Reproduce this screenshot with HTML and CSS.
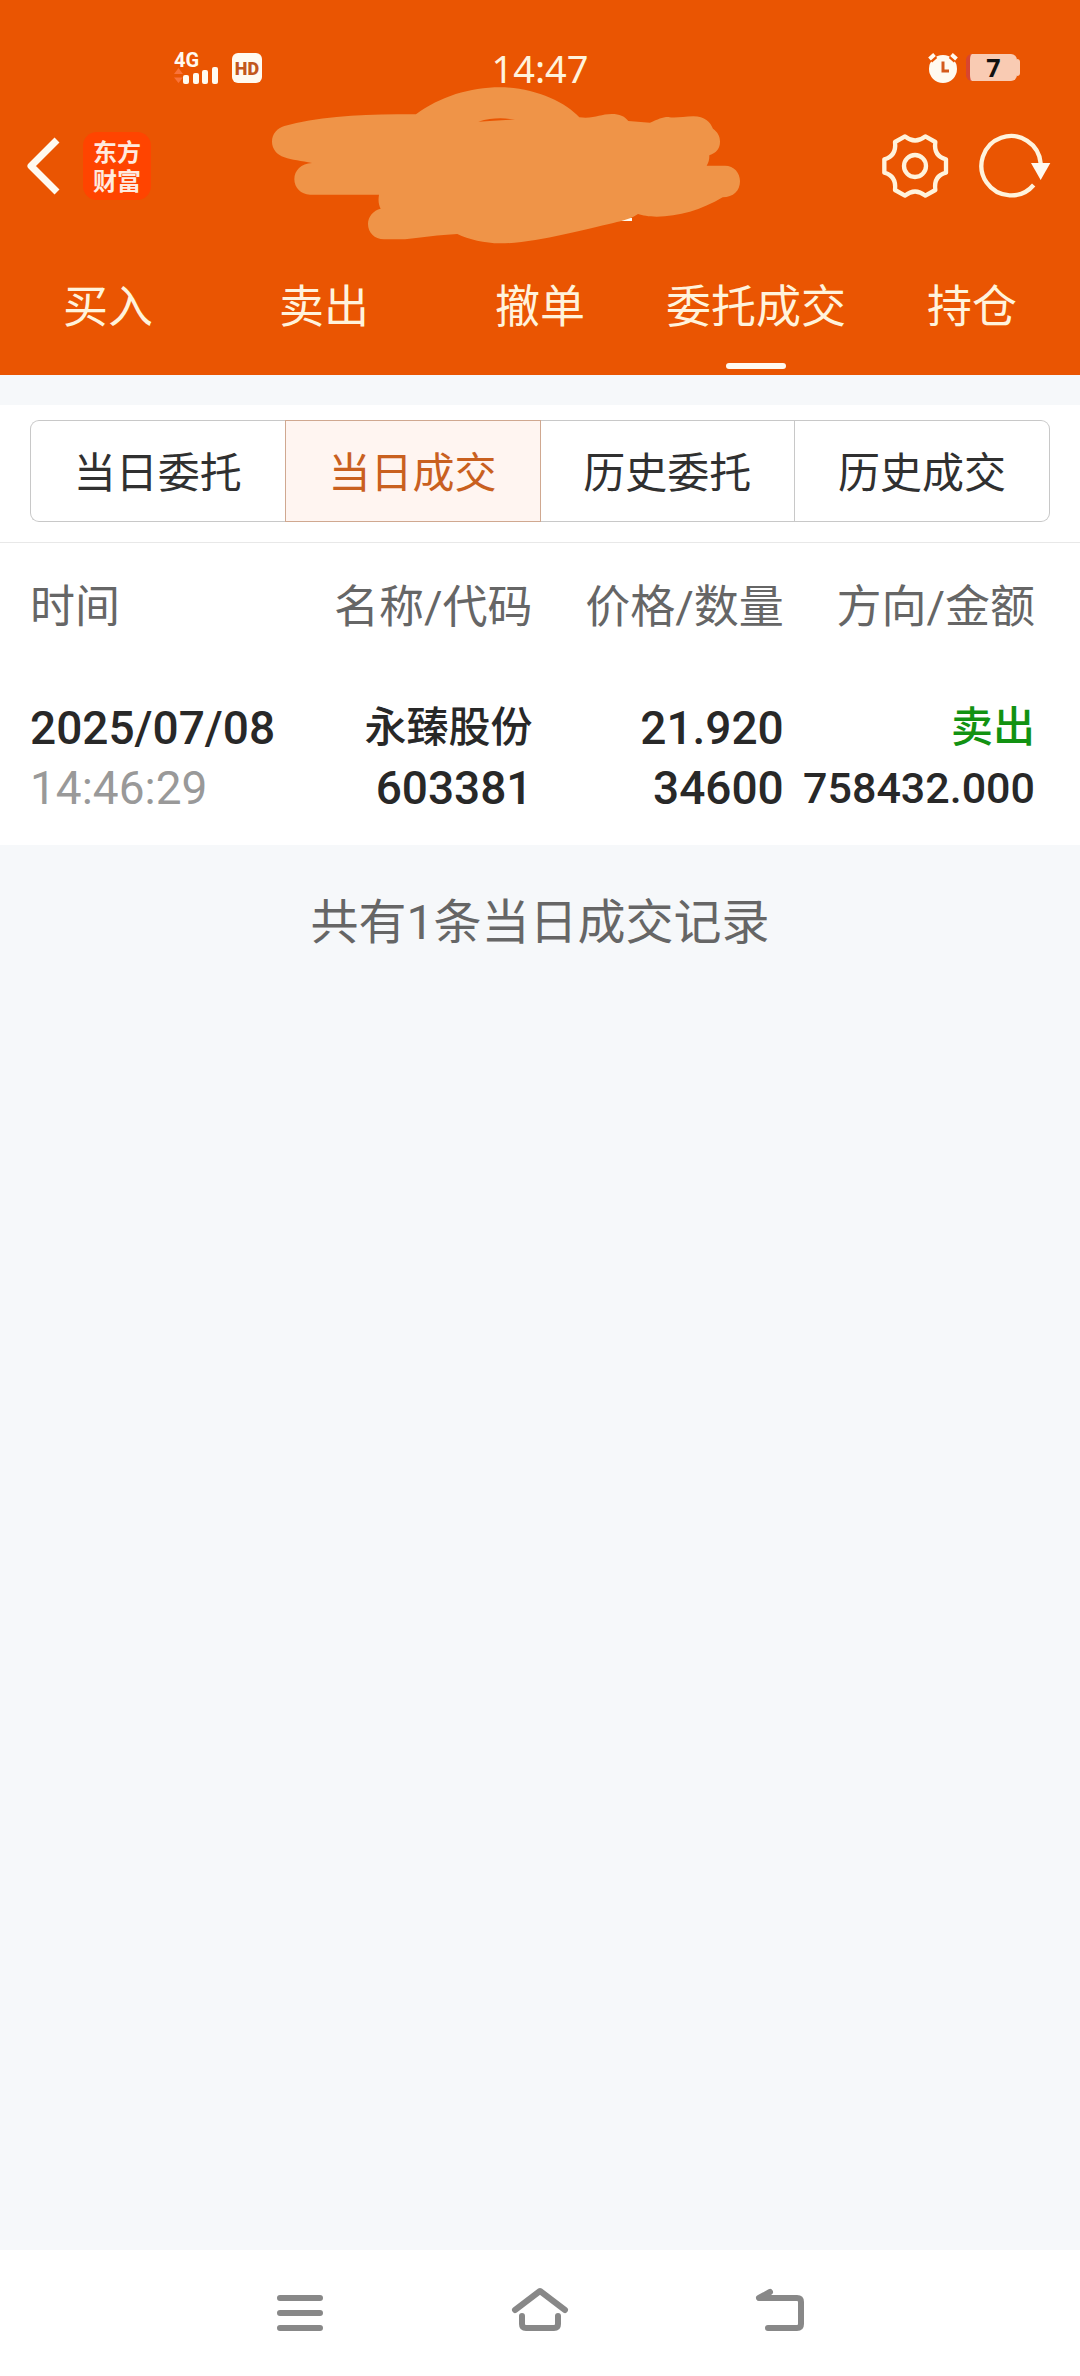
FILE: index.html
```html
<!DOCTYPE html>
<html lang="zh-CN">
<head>
<meta charset="utf-8">
<meta name="viewport" content="width=device-width, initial-scale=1">
<title>当日成交</title>
<link rel="stylesheet" href="styles.css">
</head>
<body>
<header class="header">
  <div class="status">
    <div class="status-side status-left">
      <div class="signal">
        <span class="signal-label">4G</span>
        <svg class="signal-bars" width="45" height="17" viewBox="0 0 45 17" aria-hidden="true">
          <path fill="#f9733a" d="M0 7L4.500 1L9 7ZM0 10.500L4.500 16L9 10.500Z"/>
          <g fill="#fffaf0"><rect x="9" y="8" width="6" height="9" rx="2"/><rect x="19" y="6" width="6" height="11" rx="2"/><rect x="28" y="3" width="6" height="14" rx="2"/><rect x="38" y="0" width="6" height="17" rx="2"/></g>
        </svg>
      </div>
      <span class="hd">HD</span>
    </div>
    <span class="clock">14:47</span>
    <div class="status-side status-right">
      <svg width="30" height="30" viewBox="0 0 30 30" aria-hidden="true">
        <circle cx="15" cy="16" r="14" fill="#fffaf0"/>
        <path d="M1.500 6.500L6.500 2M28.500 6.500L23.500 2" stroke="#ea5502" stroke-width="8"/>
        <path d="M1.500 6L6.500 1.500M28.500 6L23.500 1.500" stroke="#fffaf0" stroke-width="4"/>
        <path d="M15 8.500V18H21" fill="none" stroke="#d45a1c" stroke-width="3"/>
      </svg>
      <span class="battery">7</span>
    </div>
  </div>
  <div class="titlebar">
    <button class="icon-btn" type="button" aria-label="返回">
      <svg width="36" height="60" viewBox="0 0 36 60"><path d="M31 4L5 30L31 56" fill="none" stroke="#fffaf0" stroke-width="7" stroke-linejoin="round"/></svg>
    </button>
    <div class="logo">东方<br>财富</div>
    <svg class="scribble" width="510" height="190" viewBox="0 0 1530 570" aria-hidden="true">
      <rect x="1060" y="444" width="86" height="9" fill="#fffaf0"/>
      <path fill="#ef9448" fill-rule="evenodd" d="M498 133C570 80 660 52 750 52C850 52 945 95 988 142C1035 147 1050 132 1085 132C1110 132 1122 138 1135 153L1200 158C1225 148 1235 141 1255 141C1275 146 1300 139 1330 139C1365 139 1380 156 1389 176C1403 186 1410 198 1410 215C1410 235 1400 248 1378 256C1378 270 1376 278 1370 287H1425C1452 287 1470 308 1470 334C1470 362 1450 382 1418 382C1355 420 1285 440 1220 440C1195 440 1178 436 1164 432C1145 445 1120 452 1090 459C1000 478 860 520 750 520C705 520 655 508 622 492C565 495 520 502 465 508H402C373 508 354 487 354 462C354 440 370 421 392 416C386 405 384 392 387 374H180C153 374 133 353 133 328C133 301 153 281 186 279C155 273 125 270 103 262C80 254 66 236 66 215C66 192 82 174 103 168C210 138 350 130 498 133ZM685 155C725 143 760 143 795 149C755 149 720 154 685 155Z"/>
    </svg>
    <div class="actions">
      <button class="icon-btn" type="button" aria-label="设置">
        <svg width="70" height="70" viewBox="60 303 210 210"><g fill="none" stroke="#fff3dc" stroke-width="13" stroke-linejoin="round"><path d="M135 319Q165 344 196 319L226 336Q220 378 258 388V428Q220 438 226 480L196 497Q165 472 135 497L105 480Q110 438 73 428V388Q110 378 105 336Z"/><circle cx="165" cy="408" r="33"/></g></svg>
      </button>
      <button class="icon-btn" type="button" aria-label="刷新">
        <svg width="74" height="70" viewBox="353 303 222 210"><path d="M541 400A89 89 0 1 0 520 465" fill="none" stroke="#fff3dc" stroke-width="13"/><path d="M512 399H570L541 450Z" fill="#fffaf0"/></svg>
      </button>
    </div>
  </div>
  <nav class="tabs">
    <button type="button" class="tab">买入</button>
    <button type="button" class="tab">卖出</button>
    <button type="button" class="tab">撤单</button>
    <button type="button" class="tab active">委托成交</button>
    <button type="button" class="tab">持仓</button>
  </nav>
</header>
<main class="main">
  <div class="segment-wrap">
    <div class="segment">
      <button type="button" class="seg">当日委托</button>
      <button type="button" class="seg selected">当日成交</button>
      <button type="button" class="seg">历史委托</button>
      <button type="button" class="seg">历史成交</button>
    </div>
  </div>
  <div class="records">
    <table>
      <thead>
        <tr><th scope="col">时间</th><th scope="col">名称/代码</th><th scope="col">价格/数量</th><th scope="col">方向/金额</th></tr>
      </thead>
      <tbody>
        <tr>
          <td><div>2025/07/08</div><div class="muted">14:46:29</div></td>
          <td><div class="name">永臻股份</div><div>603381</div></td>
          <td><div>21.920</div><div>34600</div></td>
          <td><div class="name sell">卖出</div><div class="amount">758432.000</div></td>
        </tr>
      </tbody>
    </table>
  </div>
  <p class="summary">共有1条当日成交记录</p>
</main>
<footer class="sysnav">
  <button type="button" aria-label="菜单"><svg width="60" height="48" viewBox="270 2289 60 48"><path d="M280 2298H320M280 2313H320M280 2328H320"/></svg></button>
  <button type="button" aria-label="主页"><svg width="60" height="48" viewBox="510 2289 60 48"><path d="M515 2310L540 2291L565 2310M522 2316V2324Q522 2328 526 2328H554Q558 2328 558 2324V2316"/></svg></button>
  <button type="button" aria-label="后退"><svg width="60" height="48" viewBox="750 2289 60 48"><path d="M770 2292L759 2298H797Q801 2298 801 2302V2324Q801 2328 797 2328H768"/></svg></button>
</footer>
</body>
</html>
```
FILE: styles.css
```css
* { box-sizing: border-box; }

body {
  margin: 0;
  min-height: 100vh;
  display: flex;
  flex-direction: column;
  background: #f6f8fa;
  color: #282828;
  font-family: Roboto, "Noto Sans CJK SC", sans-serif;
}

button {
  margin: 0;
  padding: 0;
  border: 0;
  background: none;
  color: inherit;
  font: inherit;
}

svg { display: block; overflow: visible; }

.header { background: #ea5502; color: #fff3dc; }

.status {
  display: grid;
  grid-template-columns: 1fr auto 1fr;
  align-items: center;
  height: 110px;
  padding-top: 25px;
}
.status-side { display: flex; align-items: center; }
.status-left { gap: 13px; padding-left: 174px; }
.status-right { justify-content: flex-end; gap: 8px; padding-right: 63px; }
.signal { display: flex; flex-direction: column; height: 32px; }
.signal-label {
  height: 15px;
  font-size: 20px;
  line-height: 16px;
  font-weight: 700;
  color: #fffaf0;
}
.hd {
  width: 30px;
  height: 30px;
  border-radius: 6px;
  background: #fffaf0;
  color: #c2571c;
  font-size: 18px;
  line-height: 31px;
  font-weight: 900;
  text-align: center;
}
.clock { font: 38px/40px "Noto Sans", sans-serif; }
.battery {
  position: relative;
  width: 51px;
  height: 27px;
  border-radius: 6px;
  border-left: 4px solid #d8452f;
  background: #f9cbb3;
  color: #111;
  font: 700 25px/27px "Noto Sans", sans-serif;
  text-align: center;
}
.battery::after {
  content: "";
  position: absolute;
  left: 100%;
  top: 5px;
  width: 3px;
  height: 17px;
  border-radius: 0 3px 3px 0;
  background: #f9cbb3;
}

.titlebar {
  position: relative;
  display: flex;
  align-items: center;
  height: 112px;
  padding: 0 28px 0 26px;
}
.logo {
  width: 68px;
  height: 68px;
  margin-left: 21px;
  padding-top: 4px;
  border-radius: 14px;
  background: #ff4400;
  color: #ffeadf;
  font: 700 24px/29px "Noto Sans CJK SC", sans-serif;
  text-align: center;
}
.scribble { position: absolute; left: 250px; top: -40px; }
.actions { display: flex; gap: 28px; margin-left: auto; }

.tabs { display: flex; }
.tab {
  flex: 1 0 0;
  display: flex;
  flex-direction: column;
  align-items: center;
  padding: 56px 0 6px;
  font-size: 45px;
  line-height: 60px;
}
.tab::after {
  content: "";
  width: 60px;
  height: 6px;
  margin-top: 25px;
  border-radius: 3px;
}
.tab.active::after { background: #fffaf0; }

.main { flex: 1; padding-top: 30px; }

.segment-wrap {
  padding: 15px 30px 20px;
  background: #fff;
  border-bottom: 1px solid #e8e8e8;
}
.segment { display: flex; height: 102px; }
.seg {
  flex: 1;
  border: 1px solid #c8c8c8;
  border-left-width: 0;
  padding-bottom: 4px;
  font-size: 42px;
  color: #303030;
}
.seg:first-child { border-left-width: 1px; border-right-width: 0; border-radius: 9px 0 0 9px; }
.seg:last-child { border-radius: 0 9px 9px 0; }
.seg.selected {
  border: 1px solid #d0a890;
  background: #fff5f1;
  color: #c9601f;
}

.records { padding: 35px 45px 27px 30px; background: #fff; }
table { width: 100%; table-layout: fixed; border-collapse: collapse; }
th, td { padding: 0; text-align: right; line-height: 60px; }
th:first-child, td:first-child { text-align: left; }
th { padding-bottom: 60px; font-size: 45px; font-weight: 400; color: #666; }
td { font-size: 46px; font-weight: 500; white-space: nowrap; }
td div { height: 60px; }
.muted { font-weight: 400; color: #999; }
.name { font-size: 42px; }
.sell { color: #129212; }
.amount { font-size: 43px; }

.summary {
  margin: 0;
  padding-top: 48px;
  font-size: 48px;
  line-height: 60px;
  text-align: center;
  color: #666;
}

.sysnav {
  display: flex;
  height: 126px;
  padding: 0 180px;
  background: #fff;
}
.sysnav button { flex: 1; display: flex; align-items: center; justify-content: center; }
.sysnav path {
  fill: none;
  stroke: #888;
  stroke-width: 6;
  stroke-linecap: round;
  stroke-linejoin: round;
}
```
